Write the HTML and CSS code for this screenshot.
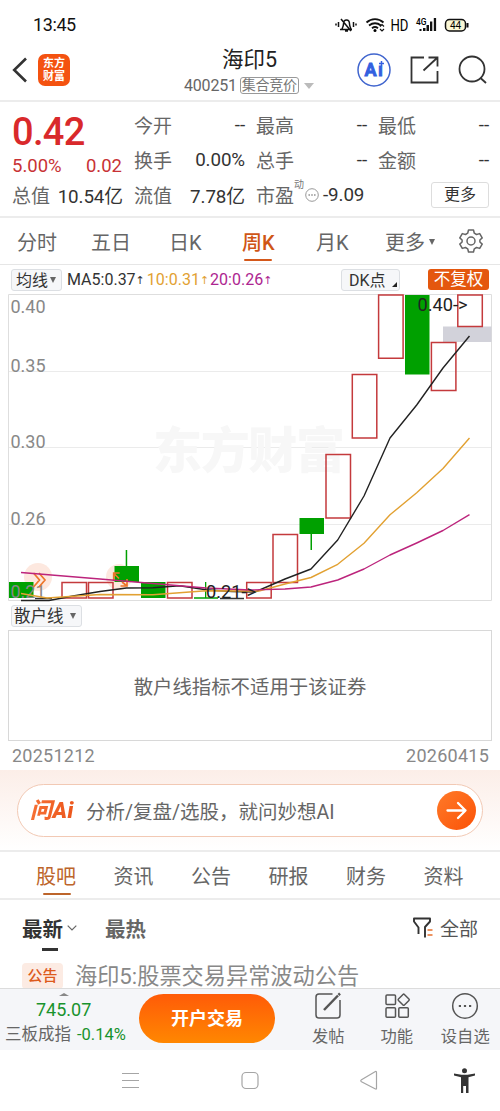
FILE: index.html
```html
<!DOCTYPE html>
<html lang="zh-CN">
<head>
<meta charset="utf-8">
<title>海印5 400251</title>
<link rel="stylesheet" href="styles.css">
</head>
<body>
<div class="screen">
  <div class="status">
    <span class="clock">13:45</span>
    <svg class="status-icons" width="140" height="24" viewBox="334 13 140 24">
      <g fill="none" stroke="#111" stroke-width="1.5">
        <path d="M340 29.5h12M342 29c1-2 1.500-3 1.500-5 0-3 1.500-4 3-4s3 1.500 3 4c0 2 .5 3 1.500 5M341 19l10 12M345 31h3M338.500 22v5M336 23.500v2M353.500 22v5M356 23.500v2"/>
        <path d="M366.500 22.500c5-4.500 12-4.500 17 0M369 25.500c4-3 8-3 12 0M372 28.200c2-1.500 4-1.500 6 0" stroke-width="1.900"/>
        <path d="M380 26.500l2-2 2 2M380 29l2 2 2-2" stroke-width="1.200"/>
        <rect x="445.500" y="19.500" width="20" height="11.500" rx="4" fill="#fbf7d5"/>
        <path d="M467.500 23v4.500" stroke-width="2"/>
      </g>
      <circle cx="375" cy="30.500" r="1.500"/>
      <path d="M419.500 29h2v2h-2zM423 28h2.500v3H423zM426.500 25h2.500v6h-2.500zM430 21.500h2.300V31H430zM433.800 18h2.300v13h-2.300z" fill="#111"/>
      <text x="390.500" y="31" font-size="16" textLength="18" lengthAdjust="spacingAndGlyphs">HD</text>
      <text x="416" y="24.500" font-size="9" font-weight="500" textLength="10.500" lengthAdjust="spacingAndGlyphs">4G</text>
      <text x="450" y="29" font-size="10" textLength="11">44</text>
    </svg>
  </div>

  <header class="header">
    <svg class="back" width="16" height="26" viewBox="0 0 16 26"><path d="M14 1.500L2.200 13 14 24.500" fill="none" stroke="#333" stroke-width="2.600"/></svg>
    <div class="brand"><span>东方</span><span>财富</span></div>
    <div class="title">
      <div class="name">海印5</div>
      <div class="code">400251<span class="phase">集合竞价</span><i class="drop"></i></div>
    </div>
    <svg class="tools" width="132" height="36" viewBox="356 52 132 36">
      <circle cx="374" cy="70" r="16" fill="none" stroke="#4065ce" stroke-width="1.500"/>
      <text x="364.500" y="76" font-size="18" font-weight="700" fill="#3360e0" stroke="#3360e0" stroke-width=".8" textLength="18.500">Aı</text>
      <path d="M381.500 61v5M379 63.500h5" stroke="#3360e0" stroke-width="1.500"/>
      <g fill="none" stroke="#333" stroke-width="1.800">
        <path d="M424 57.500h-12.500v25h26V71M423.500 70.500L437.500 57.500M428.500 57.500h9v9"/>
        <circle cx="472" cy="69" r="12.500"/><path d="M480.500 78l5.500 5"/>
      </g>
    </svg>
  </header>

  <section class="quote">
    <div class="price">
      <div class="last">0.42</div>
      <div class="change"><span>5.00%</span><span>0.02</span></div>
    </div>
    <div class="cell"><label>今开</label><b>--</b></div>
    <div class="cell"><label>最高</label><b>--</b></div>
    <div class="cell"><label>最低</label><b>--</b></div>
    <div class="cell"><label>换手</label><b>0.00%</b></div>
    <div class="cell"><label>总手</label><b>--</b></div>
    <div class="cell"><label>金额</label><b>--</b></div>
    <div class="cell"><label>总值</label><b>10.54亿</b></div>
    <div class="cell"><label>流值</label><b>7.78亿</b></div>
    <div class="cell pe"><label>市盈</label><sup>动</sup>
      <svg width="14" height="14" viewBox="0 0 14 14"><circle cx="7" cy="7" r="6.300" fill="none" stroke="#999"/><path d="M3.500 7h1.400M6.300 7h1.400M9.100 7h1.400" stroke="#888" stroke-width="1.300"/></svg>
      <b>-9.09</b></div>
    <div class="more-cell"><button class="more">更多</button></div>
  </section>

  <nav class="periods">
    <span>分时</span><span>五日</span><span>日K</span><span class="active">周K</span><span>月K</span><span>更多<i class="caret"></i></span>
    <svg width="24" height="24" viewBox="0 0 24 24"><g fill="none" stroke="#666" stroke-width="1.500" stroke-linejoin="round"><path d="M9.500 1h5l.8 3.200 2.200 1.300 3.200-.9 2.500 4.300L20.900 11v2l2.300 2.100-2.500 4.300-3.200-.9-2.200 1.300-.8 3.200h-5l-.8-3.200-2.200-1.300-3.200.9-2.500-4.300L3.100 13v-2L.8 8.900l2.500-4.300 3.200.9 2.200-1.300z"/><circle cx="12" cy="12" r="4"/></g></svg>
  </nav>

  <div class="ma">
    <span class="chip">均线<i class="caret"></i></span>
    <span class="ma5">MA5:0.37<em>↑</em></span>
    <span class="ma10">10:0.31<em>↑</em></span>
    <span class="ma20">20:0.26<em>↑</em></span>
    <span class="chip dk">DK点<i class="corner"></i></span>
    <span class="adjust">不复权</span>
  </div>

  <svg class="chart" width="500" height="308" viewBox="0 294 500 308">
    <path d="M8.500 294.500h483v306h-483z" fill="#fff" stroke="#dedede"/>
    <path d="M9 371.500h482M9 447.500h482M9 524.500h482" stroke="#ebebeb"/>
    <text class="watermark" x="153" y="468" textLength="192">东方财富</text>
    <circle cx="38" cy="577" r="14" fill="#fde8df"/><circle cx="119" cy="577" r="13" fill="#fde8df"/>
    <path d="M443 326.500h48.500v15.500H443z" fill="#d2d2da"/>
    <g fill="#00a000">
      <path d="M9 582h24.500v16H9zM114.500 566H139v16h-24.500zM141 582h24.500v16H141zM299.500 518H324v16h-24.500zM405 295h24.500v79.500H405z"/>
      <path d="M125.700 550h1.500v17h-1.500zM310.500 533h1.500v17h-1.500zM205 582h1.300v16H205zM194 597.300h24v1.500h-24z"/>
    </g>
    <g fill="none" stroke="#c43a3c" stroke-width="1.500">
      <path d="M62 582.500h24.500V598H62zM88.500 582.500H113V598H88.500zM167.500 582.500H192V598h-24.500zM246.700 582.500h24.500V598h-24.500zM273 534.500h24.500v48H273zM326 454.500h24.500V518H326zM352.300 374.500h24.500V438h-24.500zM378.600 295h24.500v63.300h-24.500zM431.400 342.500h24.500v48h-24.500zM457.800 295h24.500v31.500h-24.500z"/>
    </g>
    <path d="M35 598.500h17M220 598.500h24" stroke="#333" stroke-width="1.300"/>
    <g fill="#888" font-size="18">
      <text x="10.500" y="312.500">0.40</text><text x="10.500" y="371.500">0.35</text><text x="10.500" y="447.500">0.30</text><text x="10.500" y="525">0.26</text><text x="10.500" y="598">0.21</text>
    </g>
    <g fill="none" stroke="#ed762b" stroke-width="1.700"><path d="M33.500 573l6 7-6 7M39 573l6 7-6 7M113.700 581v-8h6M114 573.500l5 5M122 582l5 4M127 579v7h-6.500"/></g>
    <g fill="none" stroke-width="1.400" stroke-linejoin="round">
      <path stroke="#222" d="M21 600.500h28L73 596l27-4.500 26.500-3.500 26.500-.3 26.500-2 26.500 4 26 1.800 23 .5 30-13 26-10 26.700-29 26.300-44 26-58 26.700-33 26.300-37L469.500 336"/>
      <path stroke="#e2a132" d="M21 593.500l26 4.500 53-3.500 53 .3 53-4 53 .2 26-7 26-6.500 26.700-13.200 26.300-21 26-28.500 26.700-22 26.300-24.300L469.500 438"/>
      <path stroke="#bc247c" d="M21 572.500l79 6.500 53 4.500 53 4.500 44 2 35-1 26-2 26.700-7 26.300-11 26-14 26.700-12 26.300-12.500 26.500-15.800"/>
    </g>
    <g fill="#222" font-size="18"><text x="417.500" y="311" textLength="50" lengthAdjust="spacingAndGlyphs">0.40-&gt;</text><text x="206" y="598" textLength="50" lengthAdjust="spacingAndGlyphs">0.21-&gt;</text></g>
  </svg>

  <div class="indicator"><span class="chip">散户线<i class="caret"></i></span></div>
  <div class="empty">散户线指标不适用于该证券</div>
  <div class="dates"><span>20251212</span><span>20260415</span></div>

  <div class="ai">
    <div class="ask">
      <span class="ask-logo">问Ai</span><span class="ask-text">分析/复盘/选股，就问妙想AI</span>
      <svg width="39" height="39" viewBox="0 0 39 39"><defs><linearGradient id="go" x1="0" y1="0" x2="1" y2="1"><stop stop-color="#ff7a29"/><stop offset="1" stop-color="#fb5207"/></linearGradient></defs><circle cx="19.500" cy="19.500" r="19.500" fill="url(#go)"/><path d="M10.500 19.500h18M21 12l7.500 7.500L21 27" fill="none" stroke="#fff" stroke-width="2.300" stroke-linecap="round" stroke-linejoin="round"/></svg>
    </div>
  </div>

  <nav class="sections"><span class="active">股吧</span><span>资讯</span><span>公告</span><span>研报</span><span>财务</span><span>资料</span></nav>

  <div class="sort">
    <span class="newest">最新</span>
    <svg class="chev" width="10" height="6" viewBox="0 0 10 6"><path d="M.7.700L5 5 9.300.7" fill="none" stroke="#666" stroke-width="1.200"/></svg>
    <span class="hot">最热</span>
    <svg class="filter" width="20" height="22" viewBox="0 0 20 22"><path d="M5.500 17v-6.500L1 4.500V1.500h16v3l-5 5.500v10.500" fill="none" stroke="#333" stroke-width="1.900" stroke-linejoin="round"/><path d="M14.500 13h5M14.500 18h5" stroke="#e8702d" stroke-width="1.700"/></svg>
    <span>全部</span>
  </div>
  <div class="post"><span class="tag">公告</span><span>海印5:股票交易异常波动公告</span></div>

  <footer class="bar">
    <div class="index"><i class="up"></i><div class="points">745.07</div><div class="idx-line"><span>三板成指</span><b>-0.14%</b></div></div>
    <button class="trade">开户交易</button>
    <div class="action"><svg width="28" height="28" viewBox="0 0 28 28"><path d="M18.500 2H5Q2 2 2 5v18q0 3 3 3h18q3 0 3-3V8" fill="none" stroke="#555" stroke-width="1.500"/><path d="M10 18L24 3.500" stroke="#555" stroke-width="2.500"/><path d="M24.500 3l1.500-1.500" stroke="#555" stroke-width="2.500"/></svg><span>发帖</span></div>
    <div class="action"><svg width="28" height="28" viewBox="0 0 28 28"><g fill="none" stroke="#555" stroke-width="1.500"><rect x="3" y="3" width="9.500" height="9.500" rx="1"/><rect x="3" y="15.800" width="9.500" height="9.500" rx="1"/><rect x="15.800" y="15.800" width="9.500" height="9.500" rx="1"/><rect x="16.500" y="3.500" width="8.400" height="8.400" rx="1" transform="rotate(45 20.700 7.700)"/></g></svg><span>功能</span></div>
    <div class="action"><svg width="28" height="28" viewBox="0 0 28 28"><circle cx="14" cy="14" r="12.300" fill="none" stroke="#555" stroke-width="1.500"/><path d="M7.800 14h2.200M12.900 14h2.200M18 14h2.200" stroke="#555" stroke-width="2.200"/></svg><span>设自选</span></div>
  </footer>

  <svg class="sysnav" width="500" height="62" viewBox="0 1050 500 62">
    <g fill="none" stroke="#a5a5a5" stroke-width="1.200"><path d="M122 1073.500h17M122 1080.500h17M122 1087.500h17"/><rect x="242" y="1072.500" width="16" height="16" rx="4"/><path d="M376.500 1072.500v16q0 1-1.500.2l-13.500-7q-1.500-1 0-2l13.500-8q1.500-.9 1.500.8z"/></g>
    <g fill="#333"><circle cx="464.500" cy="1070.800" r="2.500"/><path d="M454 1073.500l7.500 1.300h6l7.500-1.300v2l-6.500 1.800V1093H466v-7h-2.800v7H461v-15.700l-7-1.800z"/></g>
  </svg>
</div>
</body>
</html>
```
FILE: styles.css
```css
* { box-sizing: border-box; }
body { margin: 0; background: #fff; }
.screen { width: 500px; height: 1111px; overflow: hidden; font-family: Roboto, "Noto Sans CJK SC", sans-serif; font-weight: 400; color: #333; display: flex; flex-direction: column; }
.screen > * { flex: none; }
svg { display: block; flex: none; }
b, em, i { font-weight: inherit; font-style: normal; }
span, label { white-space: nowrap; }
button { font-family: inherit; padding: 0; }

.status { height: 48px; padding: 13px 26px 0 33px; display: flex; justify-content: space-between; color: #111; }
.clock { font-size: 18px; line-height: 24px; letter-spacing: -.4px; }

.header { height: 54px; border-bottom: 2px solid #ececec; display: flex; align-items: flex-start; padding-left: 12px; }
.back { margin-top: 9px; }
.brand { margin: 6px 0 0 10px; width: 32px; height: 32px; border-radius: 7px; background: #f45210; color: #fff; font-size: 11px; line-height: 13px; font-weight: 700; display: flex; flex-direction: column; align-items: center; justify-content: center; }
.title { width: 214px; margin-left: 73px; }
.name { width: 213px; text-align: center; font-size: 21.500px; line-height: 23px; color: #222; }
.code { display: flex; align-items: center; padding-left: 41px; margin-top: 5px; height: 19px; font-size: 16px; letter-spacing: -.2px; color: #666; }
.phase { margin-left: 3px; border: 1px solid #999; border-radius: 3px; font-size: 14px; line-height: 15px; height: 17px; width: 59px; text-align: center; color: #777; }
.drop { margin-left: 5px; border: 5px solid transparent; border-top: 6px solid #bbb; border-bottom: 0; }
.tools { margin: 4px 0 0 -1px; }

.quote { height: 116px; border-bottom: 2px solid #ececec; padding: 5px 11px 0 12px; display: grid; grid-template-columns: repeat(4, 111px); grid-template-rows: repeat(3, 35px); column-gap: 11px; }
.price { grid-row: span 2; color: #d9292b; padding-top: 2px; }
.last { font-size: 38px; line-height: 46px; font-weight: 500; letter-spacing: -.7px; }
.change { display: flex; justify-content: space-between; padding-right: 1px; font-size: 18.500px; line-height: 23px; color: #c83235; }
.cell { display: flex; align-items: center; justify-content: space-between; font-size: 18.800px; }
.cell label { font-size: 19px; color: #666; }
.cell b { white-space: nowrap; letter-spacing: -.1px; }
.pe { justify-content: flex-start; }
.pe sup { font-size: 10px; line-height: 12px; align-self: flex-start; color: #777; margin-top: 2px; }
.pe svg { margin: 0 4px 0 1px; }
.more-cell { display: flex; align-items: center; justify-content: flex-end; }
.more { width: 58px; height: 26px; border: 1px solid #ddd; border-radius: 3px; background: #fff; font-size: 16px; line-height: 22px; color: #333; }

.periods { height: 47px; border-bottom: 1px solid #e6e6e6; padding-left: 17px; display: grid; grid-template-columns: 74px 78px 73px 74px 69px 74px 24px; grid-template-rows: 46px; align-items: center; font-size: 20px; color: #666; }
.periods span, .sections span { height: 100%; line-height: 50px; position: relative; }
.periods .active { color: #cf5616; font-weight: 500; }
.periods .active::after { content: ""; position: absolute; left: 2px; bottom: 3px; width: 28px; height: 2.500px; border-radius: 2px; background: #d4581a; }
.caret { display: inline-block; border: 3.500px solid transparent; border-top: 6px solid #666; border-bottom: 0; vertical-align: middle; margin: -5px 0 0 4px; }

.ma { height: 29px; padding: 0 11px 0 11px; display: flex; align-items: center; font-size: 16px; }
.chip { height: 22px; border: 1px solid #dcdfe3; border-radius: 3px; background: #f6f7f9; display: inline-flex; align-items: center; padding: 0 4px 2px; font-size: 16px; }
.chip .caret { margin: 2px 0 0 2px; }
.ma em { font-family: "DejaVu Sans", sans-serif; font-size: 11px; vertical-align: 1px; }
.ma5 { margin-left: 5px; }
.ma10 { margin-left: 2px; color: #e2a132; }
.ma20 { margin-left: 1px; color: #ad2590; }
.ma .chip:first-child { width: 51px; }
.chip.dk { width: 59px; margin-left: auto; padding-left: 7px; position: relative; }
.corner { position: absolute; right: 2px; bottom: 3px; border-left: 5px solid transparent; border-bottom: 5px solid #222; }
.adjust { width: 61px; height: 21px; margin-left: 28px; border-radius: 3px; background: #e4570e; color: #fff; font-size: 16.500px; line-height: 22px; text-align: center; }

.watermark { font-size: 49px; font-weight: 900; fill: #f7f7f7; }
.indicator { height: 28px; padding: 3px 0 0 11px; }
.indicator .chip { width: 71px; padding-left: 2px; font-size: 16.500px; }
.indicator .caret { margin-left: 6px; }
.empty { height: 111px; margin: 0 8px; border: 1px solid #d8d8d8; display: flex; align-items: center; justify-content: center; font-size: 19.400px; padding-bottom: 1px; color: #666; }
.dates { height: 29px; padding: 0 11px 0 12px; display: flex; justify-content: space-between; align-items: center; font-size: 18px; letter-spacing: .25px; color: #888; }

.ai { height: 82px; padding: 14px 17px 0; background: linear-gradient(#fceee8, #fff); border-bottom: 2px solid #ececec; }
.ask { height: 53px; border: 1px solid #f2c9b4; border-radius: 27px; background: #fff; display: flex; align-items: center; padding: 0 6px 0 12px; }
.ask-logo { width: 56px; font-size: 22px; line-height: 30px; padding-top: 1px; letter-spacing: .5px; font-weight: 900; font-style: italic; background: linear-gradient(90deg, #f67035, #e95015); background-clip: text; color: transparent; }
.ask-text { font-size: 19.500px; flex: 1; color: #666; }

.sections { height: 48px; border-bottom: 2px solid #ececec; padding-left: 36px; display: grid; grid-template-columns: repeat(6, 77.500px); grid-template-rows: 46px; font-size: 20px; color: #666; }
.sections .active { color: #bd652b; }
.sections .active::after { content: ""; position: absolute; left: 7px; bottom: 3px; width: 28px; height: 2.500px; border-radius: 2px; background: #bd652b; }

.sort { height: 59px; padding: 0 22px 4px 22px; display: flex; align-items: center; font-size: 19px; color: #555; }
.newest, .hot { font-size: 20.500px; font-weight: 700; color: #333; position: relative; }
.newest::after { content: ""; position: absolute; left: 20px; bottom: -8px; width: 16px; height: 3px; background: #333; }
.chev { margin-left: 4px; }
.hot { margin-left: 28px; color: #666; }
.filter { margin: 0 7px 0 auto; }
.post { height: 29px; padding-left: 22px; display: flex; align-items: flex-start; font-size: 22.200px; line-height: 35px; color: #888; overflow: hidden; }
.tag { width: 41px; height: 26px; margin: 4px 12px 0 0; border-radius: 4px; background: #fcebe3; color: #dd5a1c; font-size: 15px; line-height: 27px; font-weight: 500; text-align: center; }

.bar { height: 62px; background: #f5f6f9; border-top: 1px solid #dcdcdc; display: flex; align-items: flex-start; }
.index { width: 132px; height: 61px; color: #18932d; position: relative; }
.up { position: absolute; left: 59px; top: 4px; border: 5px solid transparent; border-bottom: 3px solid #888; border-top: 0; }
.points { font-size: 18px; line-height: 24px; margin-top: 9px; padding-left: 36px; }
.idx-line { display: flex; align-items: center; padding-left: 5px; font-size: 16.500px; line-height: 26px; }
.idx-line span { color: #666; font-size: 16.500px; margin-right: 6px; }
.trade { width: 136px; height: 49px; margin: 5px 19px 0 7px; border: 0; border-radius: 25px; background: linear-gradient(#ff5b08, #ff8701); color: #fff; font-size: 18px; line-height: 26px; font-weight: 700; padding-top: 1px; }
.action { width: 68.500px; padding-top: 3px; display: flex; flex-direction: column; align-items: center; font-size: 16.300px; line-height: 24px; color: #666; }
.action span { margin-top: 5px; }
```
